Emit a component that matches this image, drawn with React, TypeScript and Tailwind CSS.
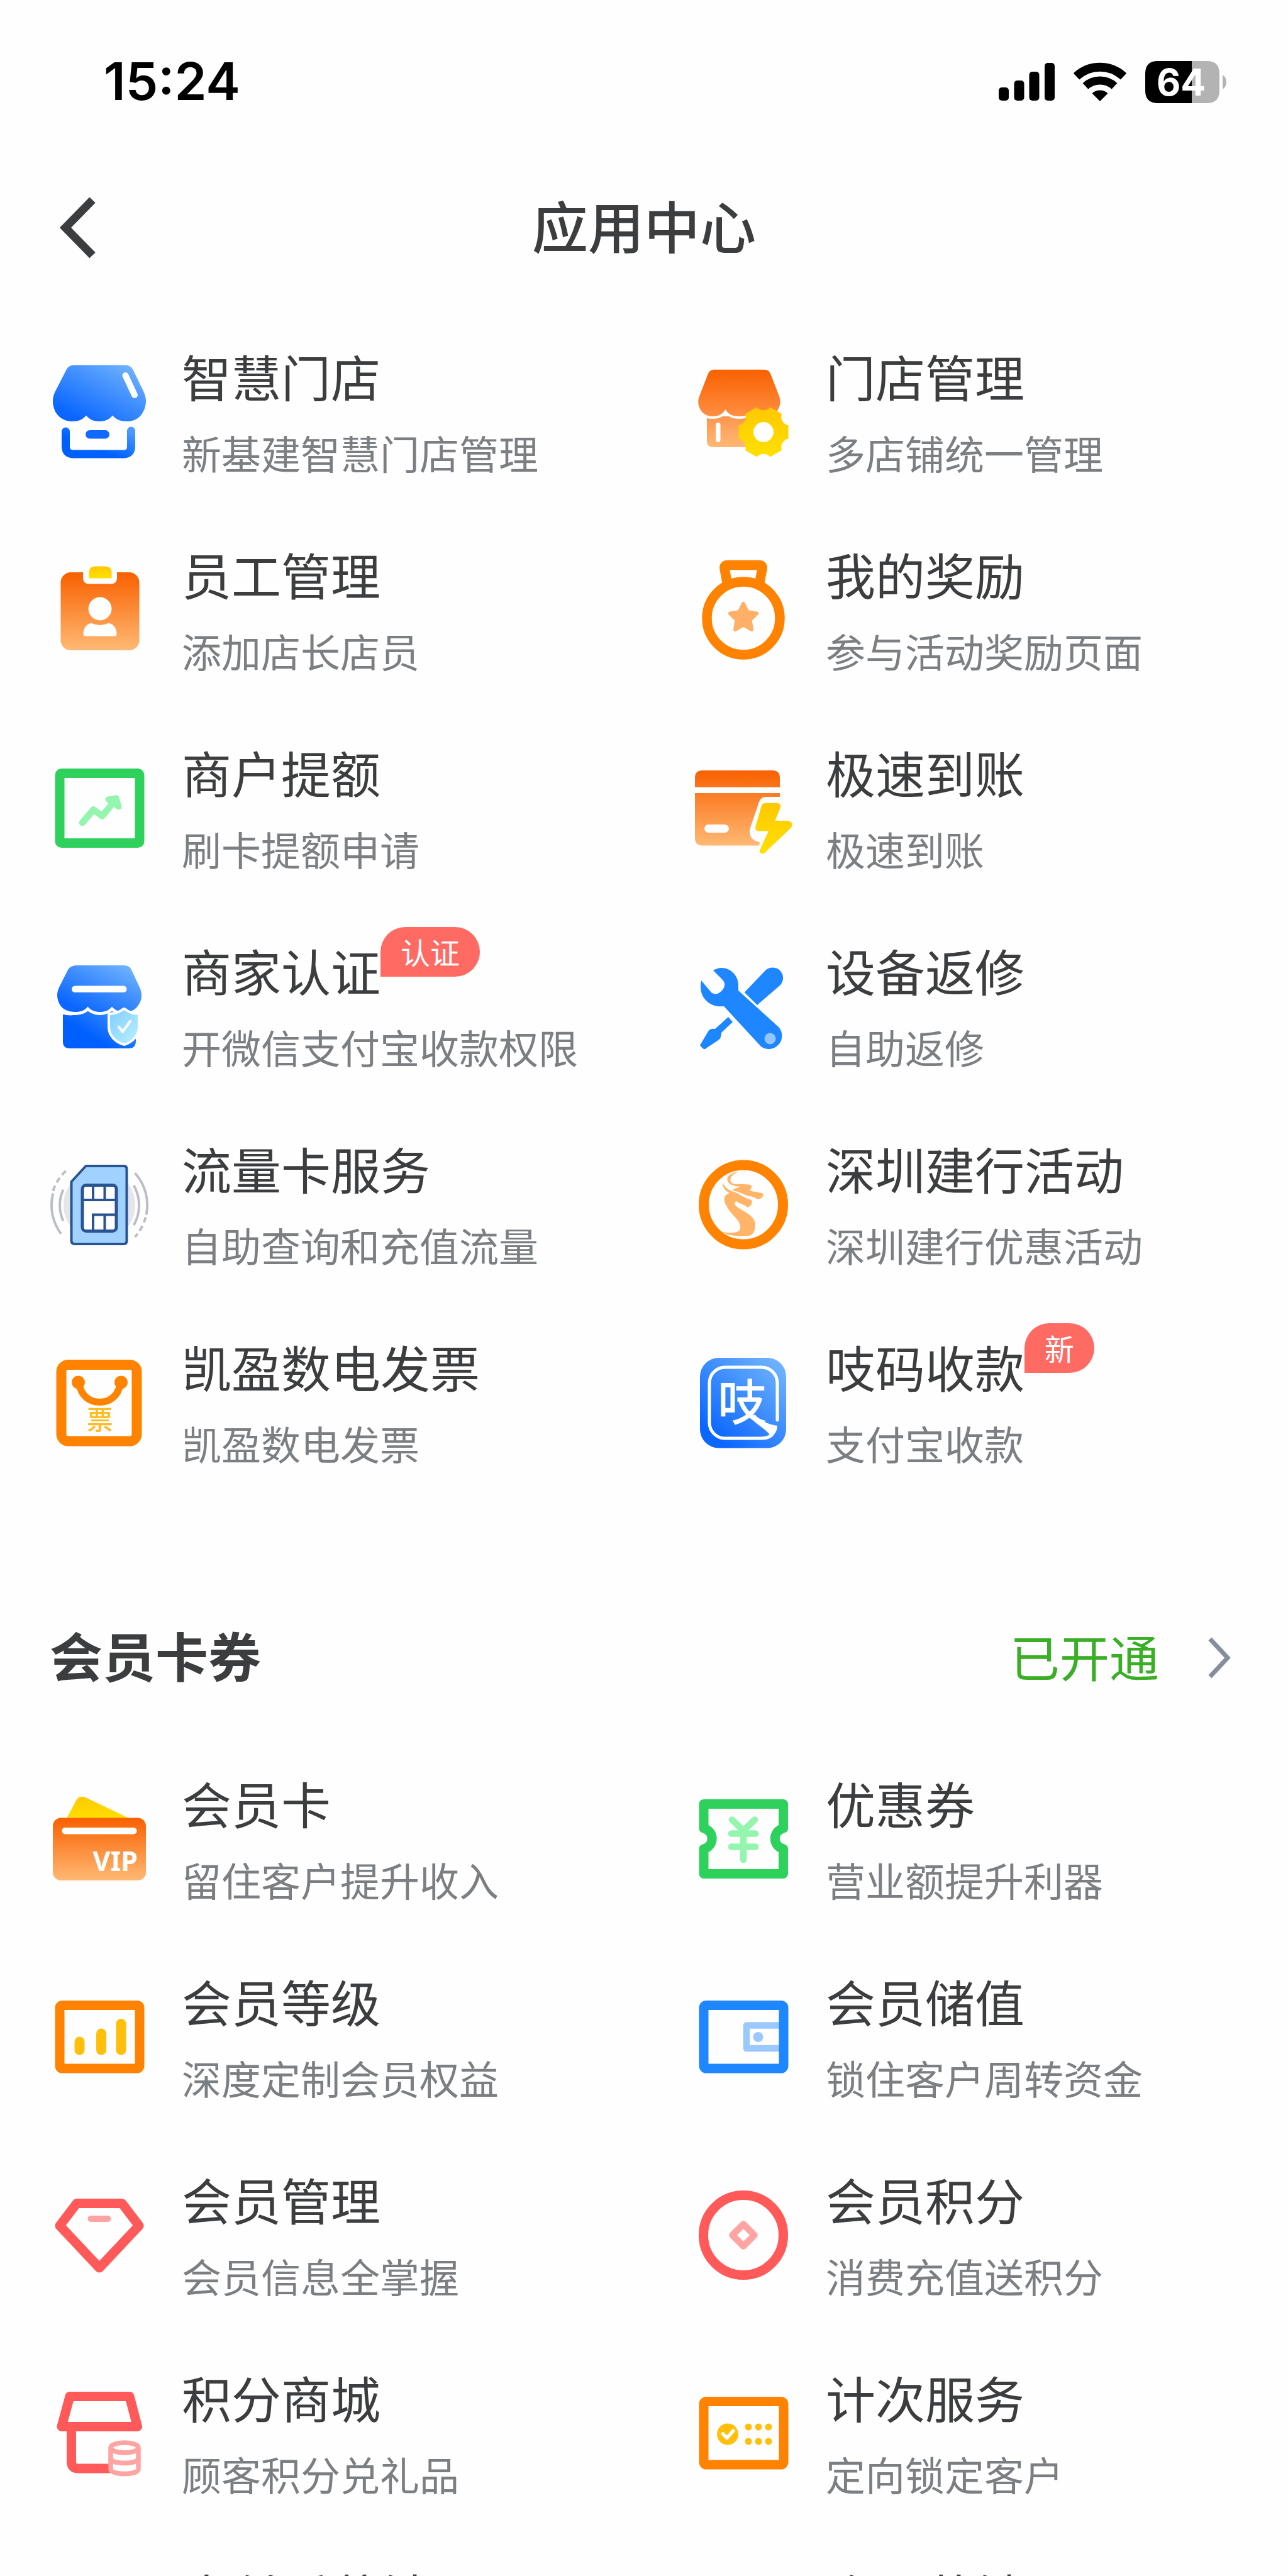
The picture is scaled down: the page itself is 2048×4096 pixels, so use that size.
import React from 'react'

type AppItem = {
  title: string
  desc: string
  badge?: string
  icon: React.ReactNode
}

const GREEN = '#2fd15d'
const ORANGE = '#ff8300'
const BLUE = '#1e87ff'
const RED = '#ff5959'

// shared gradients, referenced by id from every icon
const Gradients = () => (
  <svg className="absolute h-0 w-0" aria-hidden="true">
    <defs>
      <linearGradient id="blue" x1="0.2" y1="0.9" x2="0.9" y2="0.1">
        <stop offset="0" stopColor="#0a66ff" />
        <stop offset="1" stopColor="#6cb0ff" />
      </linearGradient>
      <linearGradient id="blueDeep" x1="0.3" y1="0.6" x2="1" y2="0">
        <stop offset="0" stopColor="#005fff" />
        <stop offset="1" stopColor="#4c9bff" />
      </linearGradient>
      <linearGradient id="orange" x1="0" y1="0" x2="0" y2="1">
        <stop offset="0" stopColor="#f96000" />
        <stop offset="1" stopColor="#ffb974" />
      </linearGradient>
      <linearGradient id="roof" x1="0" y1="0" x2="0" y2="1">
        <stop offset="0" stopColor="#f96000" />
        <stop offset="1" stopColor="#ff8f42" />
      </linearGradient>
      <linearGradient id="wall" x1="0" y1="0" x2="0" y2="1">
        <stop offset="0" stopColor="#fb9550" />
        <stop offset="1" stopColor="#ffb974" />
      </linearGradient>
      <linearGradient id="yellow" x1="0" y1="0" x2="0" y2="1">
        <stop offset="0" stopColor="#ffc800" />
        <stop offset="1" stopColor="#ffe000" />
      </linearGradient>
      <linearGradient id="shield" x1="0" y1="0" x2="1" y2="1">
        <stop offset="0" stopColor="#84cdff" />
        <stop offset="1" stopColor="#b8f0ff" />
      </linearGradient>
    </defs>
  </svg>
)

const Icon = ({ children }: { children: React.ReactNode }) => (
  <svg viewBox="0 0 158 158" className="h-[158px] w-[158px] shrink-0 overflow-visible" fill="none" aria-hidden="true">
    {children}
  </svg>
)

const SmartStoreIcon = () => (
  <Icon>
    <path
      d="M39 4.500H120C127 4.500 131 8 134 15L150 48C153 55 154 62 152 70C148 86 137 94 123 94C113 94 105 91 100 84.500C95 91 88 94 79 94C70 94 63 91 58 84.500C53 91 46 94 36 94C20 94 9 84 6 70C4 62 5 55 8 48L25 15C28 8 32 4.500 39 4.500Z"
      fill="url(#blue)"
    />
    <path d="M120.500 21L135 52" stroke="#fff" strokeWidth="10" strokeLinecap="round" />
    <path d="M25.500 110V134Q25.500 146 38 146H117Q129.500 146 129.500 134V109" stroke="url(#blueDeep)" strokeWidth="13" strokeLinecap="round" />
    <rect x="57" y="108" width="38" height="13.500" rx="6.700" fill="#1269ff" />
  </Icon>
)

const StoreManageIcon = () => (
  <Icon>
    <path d="M21 86H104V135H31Q21 135 21 125Z" fill="url(#wall)" />
    <rect x="35" y="96" width="7.500" height="31" rx="3.700" fill="#fff" />
    <path
      d="M32 11.700H112Q119 11.700 122 18L136 54C138 60 138 64 137 68C133 80 127 86 116 86C106 86 99 83 94 75C89 83 83 86 73 86C62 86 55 83 50.500 75C46 83 39 86 30 86C18 86 11 79 8 69C7 63 7 60 9 54L23 18Q26 11.700 32 11.700Z"
      fill="url(#roof)"
      stroke="#fff"
      strokeWidth="8"
      paintOrder="stroke"
    />
    <path
      d="M150.600 100.400V121.600A14 14 0 0 0 140 140L121.600 150.600A14 14 0 0 0 100.400 150.600L82 140A14 14 0 0 0 71.400 121.600V100.400A14 14 0 0 0 82 82L100.400 71.400A14 14 0 0 0 121.600 71.400L140 82A14 14 0 0 0 150.600 100.400Z"
      fill="url(#yellow)"
    />
    <circle cx="111" cy="111" r="16" fill="#fff" />
  </Icon>
)

const StaffIcon = () => (
  <Icon>
    <rect x="17.500" y="19" width="125" height="124" rx="16" fill="url(#orange)" />
    <path d="M53 17H107V28Q107 37.500 97 37.500H63Q53 37.500 53 28Z" fill="#fefefe" />
    <path d="M62.500 28.500V20Q62.500 9.500 73 9.500H88Q98.500 9.500 98.500 20V28.500Z" fill="url(#yellow)" />
    <circle cx="80" cy="77" r="18.500" fill="#fff" />
    <path d="M53.500 117C54 106 60 100 67 100Q73 103 80 103Q87 103 93 100C100 100 106 106 106.500 117Q106.500 120.500 103 120.500H57Q53.500 120.500 53.500 117Z" fill="#fff" />
  </Icon>
)

const MedalIcon = () => (
  <Icon>
    <path d="M54 40L49 13Q48 7.500 54 7.500H104Q110 7.500 109 13L104 40" stroke={ORANGE} strokeWidth="15.500" strokeLinejoin="round" />
    <circle cx="79" cy="92" r="58" stroke={ORANGE} strokeWidth="15.500" />
    <path
      d="M79 69L85.500 82L100 84.500L89.500 94.500L92 110L79 102.500L66 110L68.500 94.500L58 84.500L72.500 82Z"
      fill="#ffb066"
      stroke="#ffb066"
      strokeWidth="6"
      strokeLinejoin="round"
    />
  </Icon>
)

const LimitIcon = () => (
  <Icon>
    <rect x="16" y="23.500" width="127" height="111" rx="3" stroke={GREEN} strokeWidth="15" />
    <path d="M52 102L69.500 81.500L83.500 91.500L104 67" stroke="#94f5ae" strokeWidth="10.500" strokeLinecap="round" strokeLinejoin="round" />
    <path d="M93 65L106 63L110 77Z" fill="#94f5ae" stroke="#94f5ae" strokeWidth="9" strokeLinecap="round" strokeLinejoin="round" />
  </Icon>
)

const FastPayIcon = () => (
  <Icon>
    <path
      fillRule="evenodd"
      d="M14 19H125Q137 19 137 31V45.700H2V31Q2 19 14 19ZM2 55H137V61H116C108 61 105 65 103 72L90 110C87 122 92 131 105 133L104 138.500H14Q2 138.500 2 126.500ZM23.500 105A6.500 6.500 0 0 0 23.500 118H49.500A6.500 6.500 0 0 0 49.500 105Z"
      fill="url(#orange)"
    />
    <path
      d="M114 70.700H132Q140 71 137.500 79L129.500 99H149Q160 101 155 110L113 150Q109 153 106 150Q104 148 105.500 145L119 115.500H103Q97 115 98.500 108L107.500 76Q109 71 114 70.700Z"
      fill="url(#yellow)"
    />
  </Icon>
)

const MerchantIcon = () => (
  <Icon>
    <path d="M21 92Q43 97 60.500 84Q78 97 99 85L137 92V134Q137 146 126 146H32Q21 146 21 135Z" fill="url(#blueDeep)" />
    <path
      d="M43 14H118Q127 14 130 21L143 49C147 57 147 67 143 74C138 83 131 88 121 88C111 88 104 86 99 79.500C94 86 88 88 80 88C72 88 66 86 60.500 79.500C56 86 49 88 41 88C27 88 18 82 15 74C11 66 11 57 15 49L29 21Q33 14 43 14Z"
      fill="url(#blue)"
      stroke="#fefefe"
      strokeWidth="10"
      paintOrder="stroke"
    />
    <rect x="35" y="46.500" width="87.500" height="10.500" rx="5.200" fill="#fff" />
    <path
      d="M118.500 85Q127 92 140 93V112C140 124 131 134 118.500 138C105 134 96 124 96 112V93Q109 92 118.500 85Z"
      fill="url(#shield)"
      stroke="#fefefe"
      strokeWidth="8"
      strokeLinejoin="round"
      paintOrder="stroke"
    />
    <path d="M110 112L116 119.500L128 103" stroke="#fff" strokeWidth="4" strokeLinecap="round" strokeLinejoin="round" />
  </Icon>
)

const RepairIcon = () => (
  <Icon>
    <path d="M80.700 57L114 22A16 16 0 0 1 137 46L101 77Z" fill={BLUE} />
    <path d="M55 96L62 104L44 121Q44 130 39 133L18 147Q15 148 10 141L23 119Q26 114 34 115Z" fill={BLUE} />
    <path
      d="M31 22C48 11 70 24 71 44L71 54L135 112A21 21 0 0 1 107 143L48 79C27 82 6 66 12 38L28 57C33 61 39 60 44 55C50 49 51 43 46 37Z"
      fill={BLUE}
    />
    <circle cx="121.500" cy="130.500" r="9" fill="#93c6ff" />
  </Icon>
)

const SimIcon = () => (
  <Icon>
    <circle cx="79" cy="80" r="57" fill="#e4e6e8" />
    <g stroke="#b9bfc5" strokeWidth="4" transform="translate(2 2) scale(0.975)">
      <path d="M16.500 127A78 78 0 0 1 3.400 61" />
      <path d="M3.400 57A78 78 0 0 1 26 23" strokeDasharray="9 6" />
      <path d="M137 28A78 78 0 0 1 155.500 96" />
      <path d="M154.500 100A78 78 0 0 1 137 132" strokeDasharray="9 6" />
      <path d="M20 106A64 64 0 0 1 20 55" />
      <path d="M135 48A65 65 0 0 1 135 113" />
    </g>
    <path
      d="M57.500 18H118Q122.500 18 122.500 23V137Q122.500 142 118 142H40Q34.500 142 34.500 137V43Z"
      fill="#a1d2ff"
      stroke="#2a5391"
      strokeWidth="4"
      strokeLinejoin="round"
    />
    <rect x="52" y="48.500" width="54" height="73" rx="6" fill="#fff" stroke="#2a5391" strokeWidth="5" />
    <path d="M52 72H106M69 48V72M87.500 48V72M69 121V95.500H106M87.500 95.500V121" stroke="#2a5391" strokeWidth="4" />
  </Icon>
)

const DragonIcon = () => (
  <Icon>
    <circle cx="79" cy="79.500" r="63" stroke={ORANGE} strokeWidth="16" />
    <g fill="#ffb468">
      <path d="M72 27C63 30 56 36 59 43C63 49 72 46 79 47C85 48 92 46 92 51C92 55 88 55 90 57C96 60 108 59 111 63C110 67 107 71 101 71C97 66 90 67 82 64C75 61 69 58 62 57C64 53 70 53 74 51C66 50 57 49 54 42C51 34 61 28 72 27Z" />
      <path d="M46 45C51 53 55 57 64 59C74 63 80 69 92 72C94 78 90 82 86 84C81 79 74 79 68 74C63 76 65 80 70 84C84 92 98 99 98 112C98 124 92 131 80 129C66 130 53 128 46 123C58 125 72 125 74 118C77 105 58 95 52 81C46 71 48 64 57 61C51 58 46 53 46 45Z" />
    </g>
  </Icon>
)

const InvoiceIcon = () => (
  <Icon>
    <rect x="18.500" y="19" width="120" height="121.500" rx="11" stroke={ORANGE} strokeWidth="16" />
    <path d="M47 50C50 68 63 78.500 79.500 78.500C96 78.500 109 68 112 50" stroke={ORANGE} strokeWidth="11" />
    <circle cx="45.500" cy="47" r="10.500" fill={ORANGE} />
    <circle cx="113.500" cy="47" r="10.500" fill={ORANGE} />
    <text x="80" y="122" textAnchor="middle" className="text-[42px] font-medium" fill="#ffbd24">
      票
    </text>
  </Icon>
)

const ZhiCodeIcon = () => (
  <Icon>
    <rect x="10" y="8" width="137" height="143.500" rx="30" fill="url(#blue)" />
    <path d="M133 107V48A25 25 0 0 0 108 23H50A25 25 0 0 0 25 48V111A25 25 0 0 0 50 136H108C117 136 124 134 127 126" stroke="#fff" strokeWidth="5" strokeLinecap="round" />
    <text x="77" y="108" textAnchor="middle" className="text-[78px] font-medium" fill="#fff">
      吱
    </text>
    <path d="M97 98C106 108 118 114 133 116C133 124 129 131 122 132C116 122 104 117 92 105Z" fill="#fff" />
  </Icon>
)

const VipIcon = () => (
  <Icon>
    <path d="M26 48L42 18Q47 9 57 13L128 47Z" fill="url(#yellow)" />
    <rect x="5" y="45.500" width="148" height="99.500" rx="13" fill="url(#orange)" />
    <rect x="19.500" y="61" width="119" height="10.500" rx="5" fill="#fff" />
    <text x="140" y="130" textAnchor="end" className="font-['Noto_Sans'] text-[43px] font-bold" fill="#fff">
      VIP
    </text>
  </Icon>
)

const CouponIcon = () => (
  <Icon>
    <path
      d="M16 23.500H142.500V62C125 67 125 90 142.500 95V134.500H16V95C33.500 90 33.500 67 16 62Z"
      stroke={GREEN}
      strokeWidth="15"
      strokeLinejoin="round"
    />
    <path d="M61 48.500L79 66L97 48.500M60 70.500H98M60 91.500H98M79 66V112" stroke="#94f5ae" strokeWidth="10.500" strokeLinecap="round" strokeLinejoin="round" />
  </Icon>
)

const LevelIcon = () => (
  <Icon>
    <rect x="16" y="28.500" width="127" height="100.500" rx="4" stroke={ORANGE} strokeWidth="15" />
    <path d="M47.500 86.500V99.500M82 73.500V99.500M113.500 58V99.500" stroke="#ffbf0a" strokeWidth="16" strokeLinecap="round" />
  </Icon>
)

const WalletIcon = () => (
  <Icon>
    <path d="M136 60.500H84V97H136" stroke="#9cc9fd" strokeWidth="10.500" strokeLinejoin="round" />
    <circle cx="102.500" cy="79" r="8" fill="#9cc9fd" />
    <rect x="16" y="28.500" width="127" height="100.500" rx="4" stroke={BLUE} strokeWidth="15" />
  </Icon>
)

const DiamondIcon = () => (
  <Icon>
    <path d="M43 28.500H115L142 64L79 131L16 64Z" stroke={RED} strokeWidth="15" strokeLinejoin="round" />
    <rect x="60.500" y="48" width="37" height="10" rx="5" fill="#ffa3a3" />
  </Icon>
)

const PointsIcon = () => (
  <Icon>
    <circle cx="79" cy="79" r="63.500" stroke={RED} strokeWidth="15" />
    <path d="M79 61.500L96.500 79L79 96.500L61.500 79Z" stroke="#ffa3a3" strokeWidth="10.500" strokeLinejoin="round" />
  </Icon>
)

const MallIcon = () => (
  <Icon>
    <path d="M32 20.500H127L139.500 68.500H19Z" stroke={RED} strokeWidth="15" strokeLinejoin="round" />
    <path d="M34.500 70V124Q34.500 135 45 135H96" stroke={RED} strokeWidth="15" />
    <path d="M97 101V137C97 145 141 145 141 137V101Z" fill="#fefefe" />
    <g stroke="#ffa3a3" strokeWidth="7.500">
      <ellipse cx="119" cy="102" rx="22" ry="8" />
      <path d="M97 102V136C97 146 141 146 141 136V102" />
      <path d="M97 119C97 129 141 129 141 119" />
    </g>
  </Icon>
)

const CountIcon = () => (
  <Icon>
    <rect x="16" y="28.500" width="127" height="100.500" rx="4" stroke={ORANGE} strokeWidth="15" />
    <circle cx="54" cy="80.500" r="17" fill="#ffbf0a" />
    <path d="M46.500 80L53 86.500L63 75" stroke="#fff" strokeWidth="5.500" strokeLinecap="round" strokeLinejoin="round" />
    <g fill="#ffbf0a">
      <circle cx="87" cy="69" r="5.500" />
      <circle cx="103" cy="69" r="5.500" />
      <circle cx="119" cy="69" r="5.500" />
      <circle cx="87" cy="92" r="5.500" />
      <circle cx="103" cy="92" r="5.500" />
      <circle cx="119" cy="92" r="5.500" />
    </g>
  </Icon>
)

const storeApps: AppItem[] = [
  { title: '智慧门店', desc: '新基建智慧门店管理', icon: <SmartStoreIcon /> },
  { title: '门店管理', desc: '多店铺统一管理', icon: <StoreManageIcon /> },
  { title: '员工管理', desc: '添加店长店员', icon: <StaffIcon /> },
  { title: '我的奖励', desc: '参与活动奖励页面', icon: <MedalIcon /> },
  { title: '商户提额', desc: '刷卡提额申请', icon: <LimitIcon /> },
  { title: '极速到账', desc: '极速到账', icon: <FastPayIcon /> },
  { title: '商家认证', desc: '开微信支付宝收款权限', badge: '认证', icon: <MerchantIcon /> },
  { title: '设备返修', desc: '自助返修', icon: <RepairIcon /> },
  { title: '流量卡服务', desc: '自助查询和充值流量', icon: <SimIcon /> },
  { title: '深圳建行活动', desc: '深圳建行优惠活动', icon: <DragonIcon /> },
  { title: '凯盈数电发票', desc: '凯盈数电发票', icon: <InvoiceIcon /> },
  { title: '吱码收款', desc: '支付宝收款', badge: '新', icon: <ZhiCodeIcon /> },
]

const memberApps: AppItem[] = [
  { title: '会员卡', desc: '留住客户提升收入', icon: <VipIcon /> },
  { title: '优惠券', desc: '营业额提升利器', icon: <CouponIcon /> },
  { title: '会员等级', desc: '深度定制会员权益', icon: <LevelIcon /> },
  { title: '会员储值', desc: '锁住客户周转资金', icon: <WalletIcon /> },
  { title: '会员管理', desc: '会员信息全掌握', icon: <DiamondIcon /> },
  { title: '会员积分', desc: '消费充值送积分', icon: <PointsIcon /> },
  { title: '积分商城', desc: '顾客积分兑礼品', icon: <MallIcon /> },
  { title: '计次服务', desc: '定向锁定客户', icon: <CountIcon /> },
  { title: '支付后营销', desc: '支付后送优惠', icon: <CouponIcon /> },
  { title: '会员营销', desc: '精准触达客户', icon: <LevelIcon /> },
]

const StatusBar = () => (
  <div className="flex h-[260px] items-center justify-between pr-[98px] pl-[165px] text-black">
    <span className="font-['Inter'] text-[82px] leading-[100px] font-semibold">15:24</span>
    <div className="flex items-center gap-[30px]">
      <svg viewBox="0 0 89 60" className="h-[60px] w-[89px]" fill="currentColor" aria-hidden="true">
        <rect x="0" y="39" width="16" height="21" rx="5" />
        <rect x="24.500" y="28" width="16" height="32" rx="5" />
        <rect x="48.500" y="14" width="16" height="46" rx="5" />
        <rect x="73" y="0" width="16" height="60" rx="5" />
      </svg>
      <svg viewBox="0 0 84 63" className="h-[63px] w-[84px]" fill="none" stroke="currentColor" aria-hidden="true">
        <path d="M4.500 22.500A55 55 0 0 1 79.500 22.500" strokeWidth="14" />
        <path d="M19 38A34 34 0 0 1 65 38" strokeWidth="13" />
        <path d="M42 62L29.500 49.500A18 18 0 0 1 54.500 49.500Z" fill="currentColor" stroke="none" />
      </svg>
      <svg viewBox="0 0 129 67" className="h-[67px] w-[129px] overflow-visible" aria-hidden="true">
        <path d="M74 0H98Q118 0 118 20V47Q118 67 98 67H74Z" fill="#b3b3b3" />
        <path d="M74 0H20Q0 0 0 20V47Q0 67 20 67H74Z" fill="#000" />
        <path d="M123 22Q129 26 129 33.500Q129 41 123 45Z" fill="#b3b3b3" />
        <text x="57" y="55" textAnchor="middle" className="font-['Inter'] text-[59px] font-bold" fill="#fff">
          64
        </text>
      </svg>
    </div>
  </div>
)

const AppCell = ({ item }: { item: AppItem }) => (
  <a href="#" className="flex h-[315px] items-center gap-[52px] pl-[79px]">
    {item.icon}
    <div className="flex flex-col items-start gap-[22px] whitespace-nowrap">
      <span className="relative text-[79px] leading-[106px] text-[#3b3d3f]">
        {item.title}
        {item.badge && (
          <span className="absolute -top-4 left-full flex h-[79px] items-center rounded-full rounded-bl-none bg-[#ff6a63] px-8 text-[47px] leading-[60px] text-white">
            {item.badge}
          </span>
        )}
      </span>
      <span className="text-[63px] leading-[92px] text-[#7b7f82]">{item.desc}</span>
    </div>
  </a>
)

const AppGrid = ({ items }: { items: AppItem[] }) => (
  <div className="grid grid-cols-2">
    {items.map((item) => (
      <AppCell key={item.title} item={item} />
    ))}
  </div>
)

const App = () => {
  return (
    <div className="h-screen overflow-hidden bg-[#fefefe] font-['Noto_Sans_CJK_SC','Noto_Sans',sans-serif]">
      <Gradients />
      <StatusBar />
      <header className="grid h-[204px] grid-cols-[1fr_auto_1fr] items-center px-[79px]">
        <button type="button" aria-label="返回" className="justify-self-start text-[#3b3d3f]">
          <svg viewBox="0 0 90 100" className="h-[100px] w-[90px]" fill="none" stroke="currentColor" strokeWidth="13" aria-hidden="true">
            <path d="M68 6L25 50L68 94" />
          </svg>
        </button>
        <h1 className="pb-2.5 text-[89px] leading-[120px] font-medium text-[#3b3d3f]">应用中心</h1>
      </header>
      <main className="pt-[33px]">
        <AppGrid items={storeApps} />
        <section className="mt-[118px]">
          <div className="flex h-[261px] items-center justify-between px-[79px]">
            <h2 className="pb-2.5 text-[84px] leading-[120px] font-bold text-[#3b3d3f]">会员卡券</h2>
            <a href="#" className="flex items-center gap-[72px] text-[79px] leading-[108px] text-[#3aae25]">
              <span className="pb-1.5">已开通</span>
              <svg viewBox="0 0 54 70" className="h-[70px] w-[54px]" fill="none" stroke="#868e9d" strokeWidth="7" aria-hidden="true">
                <path d="M9 5L37 35L9 65" />
              </svg>
            </a>
          </div>
          <AppGrid items={memberApps} />
        </section>
      </main>
    </div>
  )
}

export default App
